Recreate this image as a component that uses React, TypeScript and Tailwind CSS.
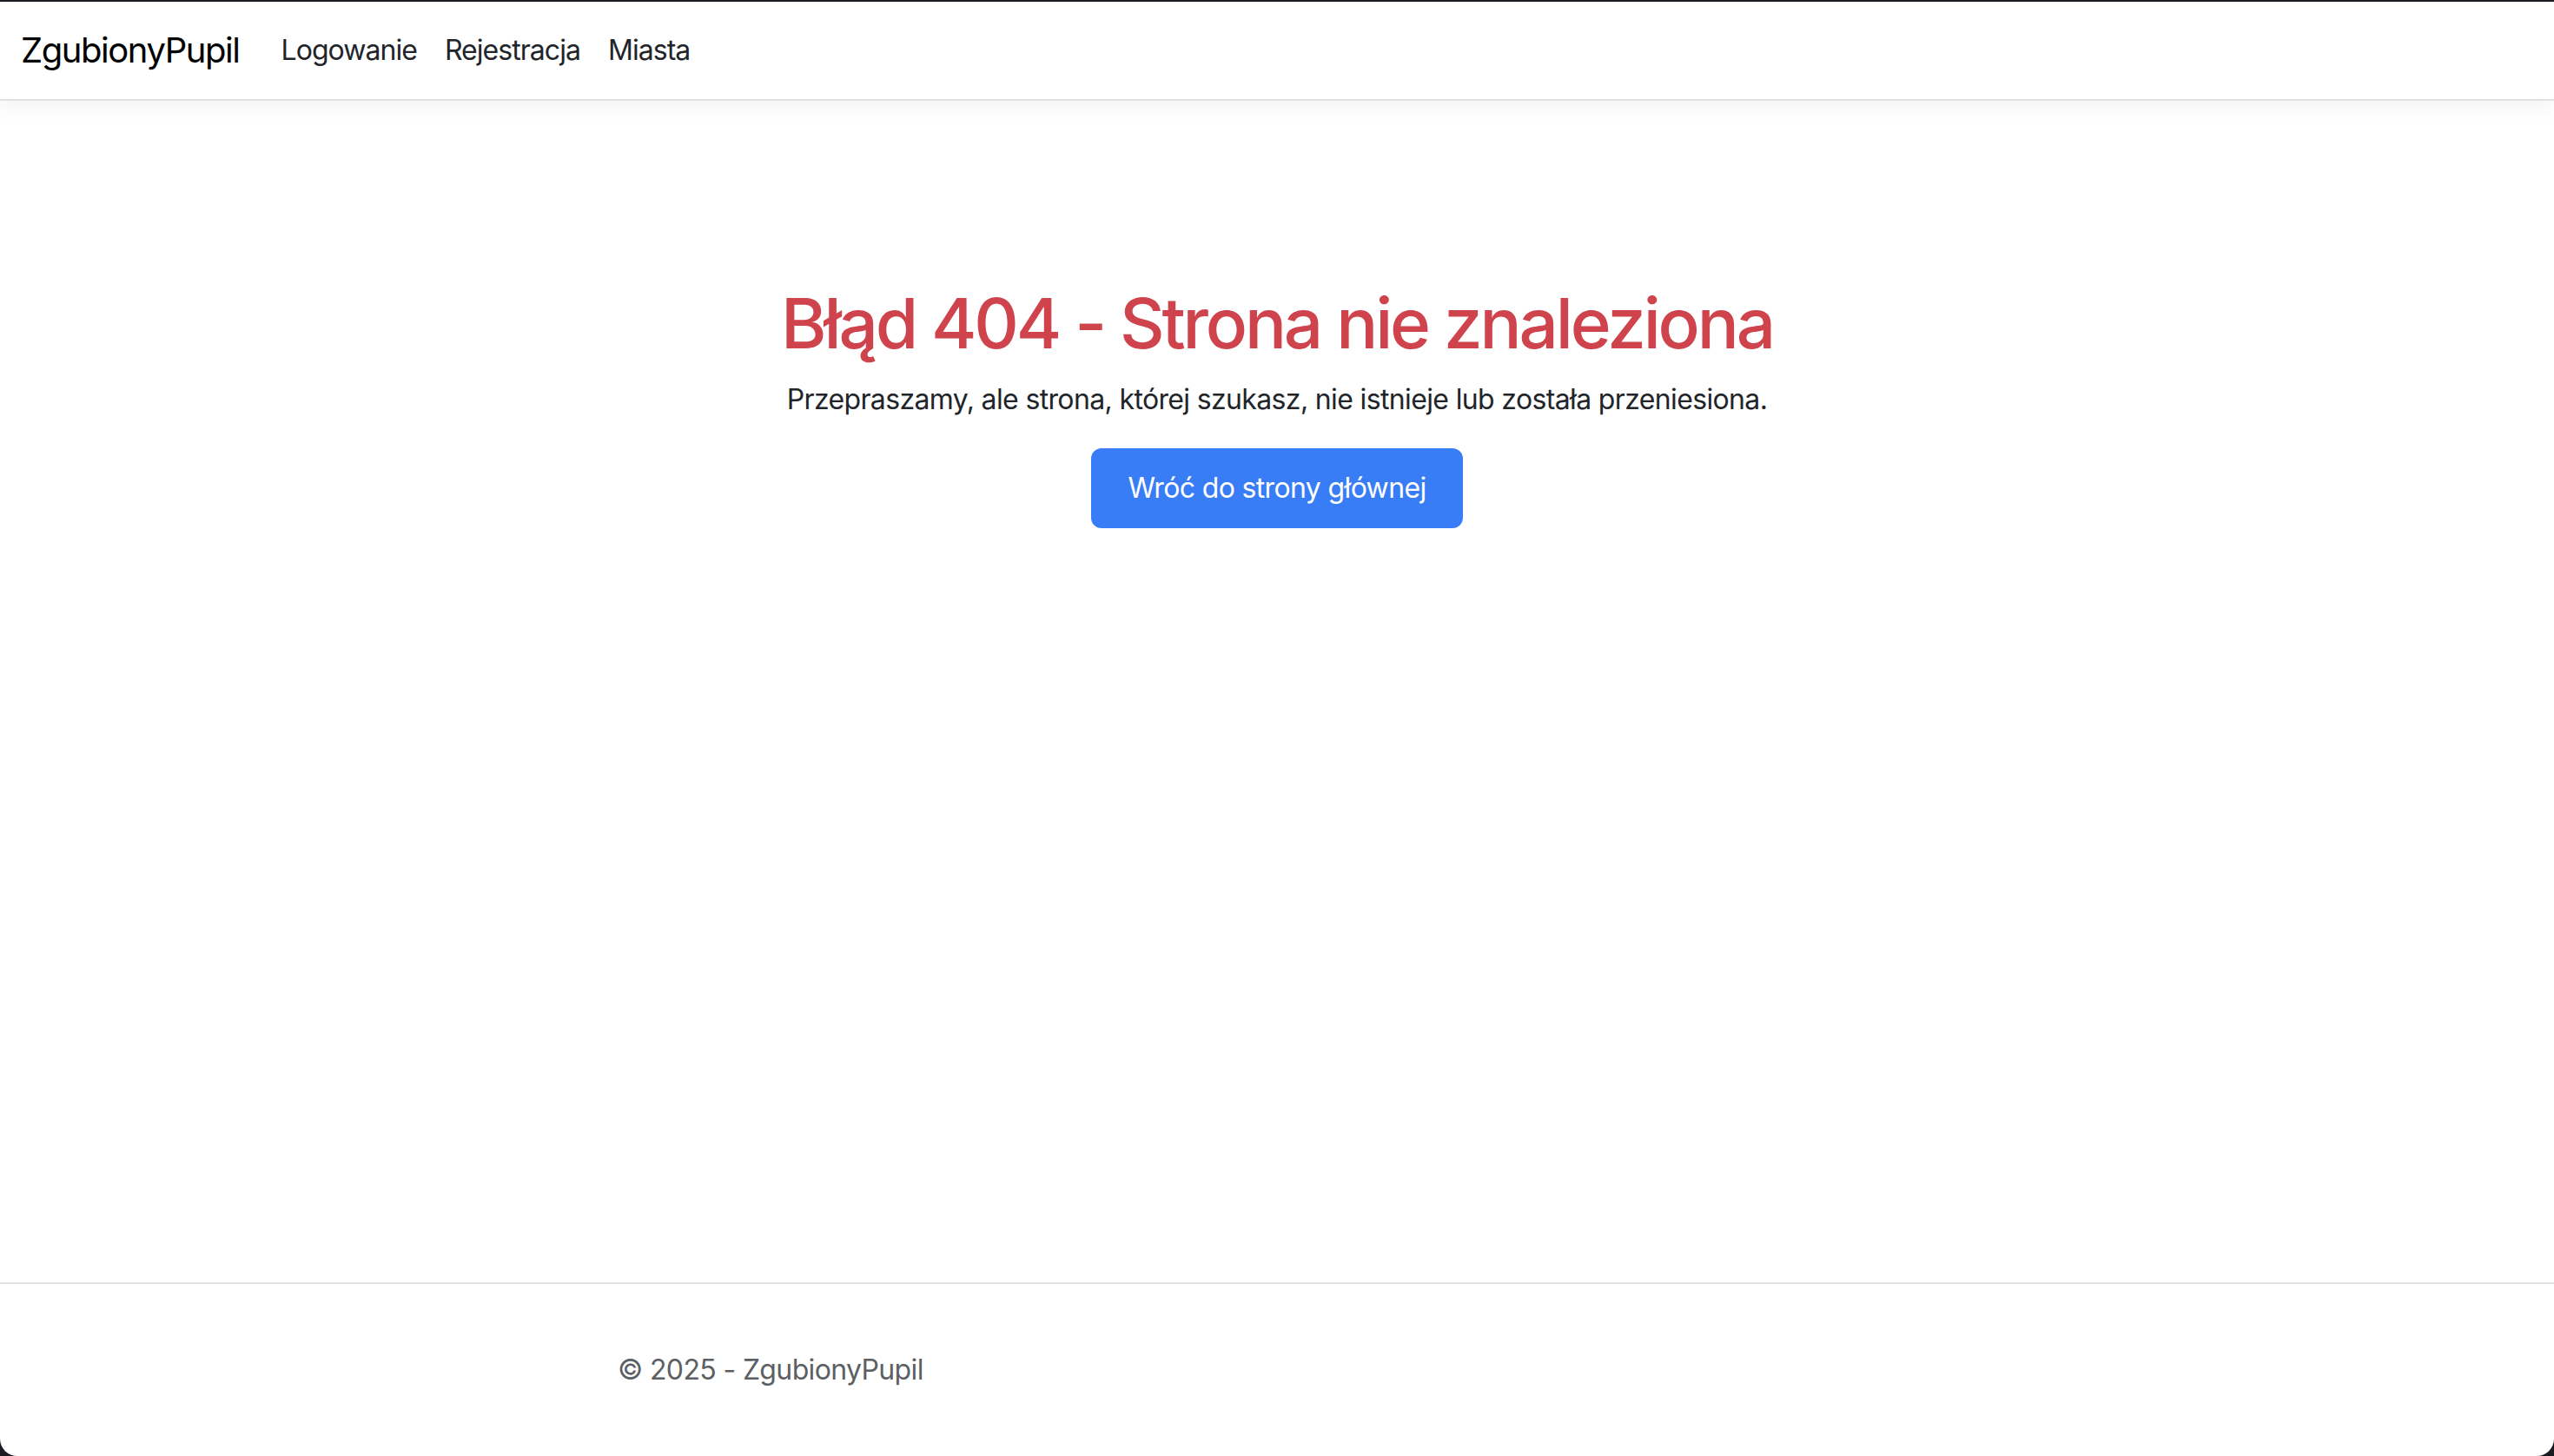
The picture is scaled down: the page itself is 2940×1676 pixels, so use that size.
export default function App() {
  return (
    <div className="h-[1676px] bg-[#1b1b22] pt-[2px] font-['Inter','Liberation_Sans',sans-serif]">
      <div className="flex h-full flex-col overflow-hidden rounded-b-[20px] bg-white">
        <header className="relative z-10 flex h-[114px] shrink-0 items-center border-b-2 border-[#dee2e6] bg-white px-[24px] shadow-[0_8px_24px_rgba(0,0,0,0.05)]">
          <a href="#" className="mr-[32px] text-[40px] leading-[60px] tracking-[-0.036em] text-black">
            ZgubionyPupil
          </a>
          <nav className="flex items-center">
            <a href="#" className="px-[16px] text-[32px] leading-[48px] tracking-[-0.03em] text-[#212529]">
              Logowanie
            </a>
            <a href="#" className="px-[16px] text-[32px] leading-[48px] tracking-[-0.03em] text-[#212529]">
              Rejestracja
            </a>
            <a href="#" className="px-[16px] text-[32px] leading-[48px] tracking-[-0.03em] text-[#212529]">
              Miasta
            </a>
          </nav>
        </header>

        <main className="flex-1 pt-[208px] text-center">
          <h1 className="mb-[16px] text-[80px] leading-[96px] font-medium tracking-[-0.04em] text-[#cf444c]">
            Błąd 404 - Strona nie znaleziona
          </h1>
          <p className="mb-[32px] text-[32px] leading-[48px] tracking-[-0.02em] text-[#212529]">
            Przepraszamy, ale strona, której szukasz, nie istnieje lub została przeniesiona.
          </p>
          <a
            href="#"
            className="inline-block rounded-[12px] bg-[#387cf6] px-[42px] py-[22px] text-[32px] leading-[48px] tracking-[-0.02em] text-white"
          >
            Wróć do strony głównej
          </a>
        </main>

        <footer className="flex h-[200px] shrink-0 items-center border-t-2 border-[#dee2e6] pl-[711px]">
          <p className="text-[32px] leading-[48px] tracking-[-0.02em] text-[#5c5f63]">© 2025 - ZgubionyPupil</p>
        </footer>
      </div>
    </div>
  )
}
